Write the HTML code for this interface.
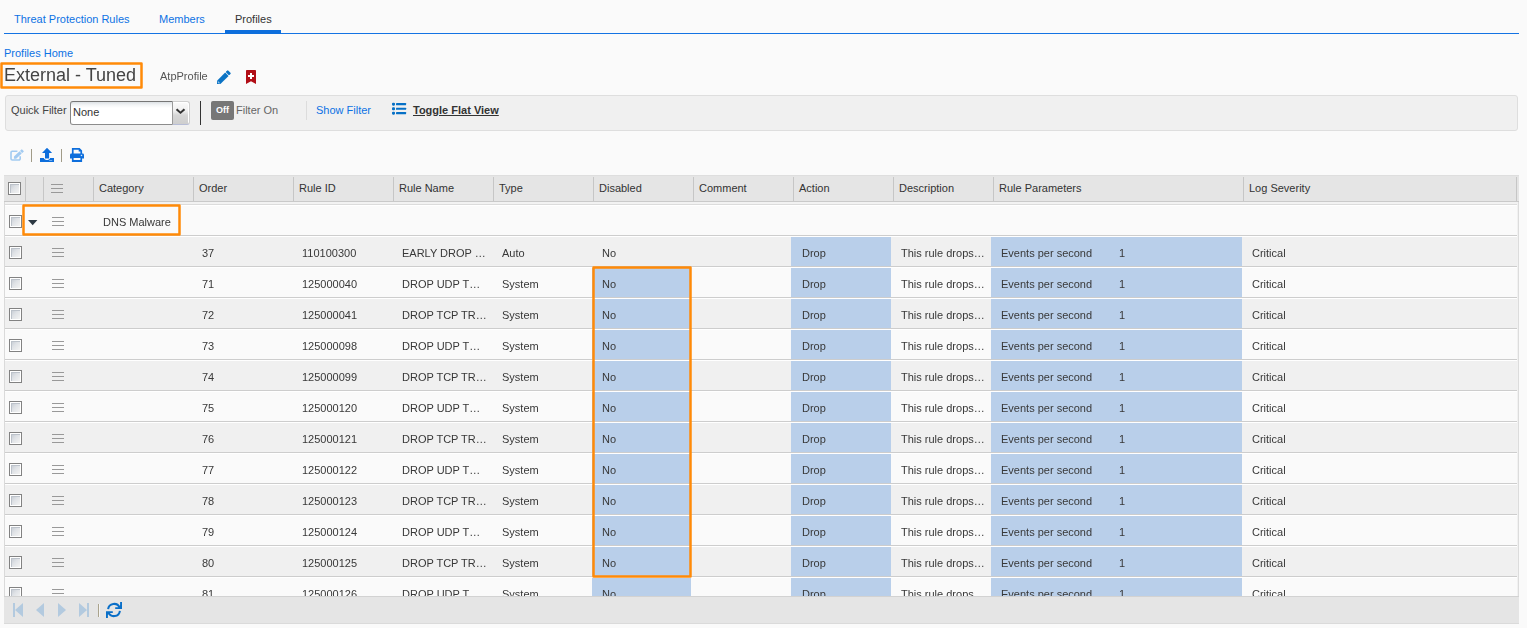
<!DOCTYPE html><html><head><meta charset="utf-8"><title>Profiles</title><style>
html,body{margin:0;padding:0}
body{width:1527px;height:628px;position:relative;overflow:hidden;background:#fafafa;font:11px/13px "Liberation Sans",sans-serif;color:#444}
.a{position:absolute;white-space:nowrap}
.lnk{color:#0d72e4}
.hd{position:absolute;left:4px;top:175px;width:1515px;height:25px;background:#e5e5e5;border-top:1px solid #dedede;border-bottom:1px solid #c9c9c9}
.hs{position:absolute;top:1px;width:1px;height:24px;background:#c6c6c6}
.ht{position:absolute;top:6px;color:#333;white-space:nowrap}
.cb{position:absolute;width:11px;height:11px;border:1px solid #828282;background:#fff;box-sizing:content-box}
.cb i{position:absolute;left:1px;top:1px;width:9px;height:9px;background:linear-gradient(135deg,#c3c9d1 0%,#dfe2e6 45%,#f3f3f3 100%);box-shadow:inset 1px 1px 0 #bcc2ca}
.hb{position:absolute;width:12px;height:9px;border-top:1px solid #999;border-bottom:1px solid #999;box-sizing:border-box}
.hb i{position:absolute;left:0;top:3px;width:12px;height:1px;background:#999}
.row{position:absolute;left:5px;width:1512px;height:29px;border-top:1px solid #fff;border-bottom:1px solid #cdcdcd;background:#fafafa}
.row.alt{background:#f0f0f0}
.row .t{position:absolute;top:10px;white-space:nowrap;color:#383838}
.gs{will-change:transform}
.bl{position:absolute;top:0;height:29px;background:#b9cfea}
</style></head><body>
<div class="a" style="left:4px;top:33px;width:1515px;height:1px;background:#1473e3"></div>
<div class="a" style="left:225px;top:30px;width:56px;height:4px;background:#0d6edc"></div>
<div class="a lnk" style="left:14px;top:13px">Threat Protection Rules</div>
<div class="a lnk" style="left:159px;top:13px">Members</div>
<div class="a" style="left:235px;top:13px;color:#333">Profiles</div>
<div class="a lnk" style="left:4px;top:47px">Profiles Home</div>
<svg class="a" style="left:0px;top:62px" width="143" height="27" viewBox="0 0 143 27"><rect x="1.500" y="1.500" width="140" height="24" fill="none" stroke="#ff8a08" stroke-width="2.500" stroke-linejoin="round"/></svg>
<svg class="a" style="left:217px;top:70px" width="15" height="15" viewBox="0 0 15 15"><g transform="translate(0,14.1) rotate(-45)" fill="#0b73c4"><path d="M0 0L2.400-2.400H14V2.400H2.400z"/><rect x="14.600" y="-2.400" width="3" height="4.800" rx="1"/><ellipse cx="2.300" cy="0" rx="0.700" ry="1.400" fill="#8ec0e8"/></g></svg>
<svg class="a" style="left:246px;top:70px" width="10" height="15" viewBox="0 0 10 15"><path d="M0.800 0h8.400a0.800 0.800 0 0 1 .8.800V14.100l-5-2.900L0 14.100V0.800A0.800 0.800 0 0 1 .8 0z" fill="#b10e16"/><path d="M4 2.900h2v2h2v2.100H6v2H4V7H2V4.900h2z" fill="#fff"/></svg>
<div class="a" style="left:5px;top:95px;width:1511px;height:34px;border:1px solid #dedede;border-radius:3px;background:#f0f0f0"></div>
<div class="a" style="left:11px;top:104px;color:#444">Quick Filter</div>
<div class="a" style="left:70px;top:101px;width:101px;height:22px;border:1px solid #858585;border-top-color:#767676;border-right-color:#9a9a9a;border-bottom-color:#8c8c8c;border-radius:3px 0 0 3px;background:linear-gradient(#dde1e5 0px,#f3f5f6 3px,#fff 6px)"></div>
<div class="a" style="left:173px;top:101px;width:16px;height:22px;border:1px solid #cfcfcf;border-left:0;border-bottom-color:#b7bdd6;border-radius:0 3px 3px 0;background:linear-gradient(#fbfbfb 0%,#efefef 40%,#d6d6d6 60%,#cecece 100%);box-shadow:inset -1px 1px 0 #fff"></div>
<svg class="a" style="left:175px;top:108px" width="11" height="7" viewBox="0 0 11 7"><path d="M0.800 2L2.300 0.600 5.500 3.500 8.700 0.600 10.200 2 5.500 6.100z" fill="#333"/></svg>
<div class="a" style="left:73px;top:106px;color:#333">None</div>
<div class="a" style="left:200px;top:101px;width:1px;height:24px;background:#333"></div>
<div class="a" style="left:211px;top:101px;width:23px;height:19px;border-radius:2px;background:#777"></div>
<div class="a" style="left:216px;top:104px;color:#fff;font-weight:bold;font-size:9px">Off</div>
<div class="a" style="left:236px;top:104px;color:#666">Filter On</div>
<div class="a" style="left:306px;top:101px;width:1px;height:19px;background:#dcdcdc"></div>
<div class="a lnk" style="left:316px;top:104px">Show Filter</div>
<svg class="a" style="left:392px;top:102px" width="15" height="14" viewBox="0 0 15 14"><g fill="#0670c6"><rect x="0" y="0.700" width="3" height="3" rx="1.100"/><rect x="4" y="1.100" width="10.100" height="2.100" rx=".4"/><rect x="0" y="5.300" width="3" height="3" rx="1.100"/><rect x="4" y="5.750" width="10.100" height="2.100" rx=".4"/><rect x="0" y="9.700" width="3" height="3" rx="1.100"/><rect x="4" y="10.100" width="10.100" height="2.100" rx=".4"/></g></svg>
<div class="a" style="left:413px;top:104px;color:#333;font-weight:bold;text-decoration:underline">Toggle Flat View</div>
<svg class="a" style="left:10px;top:148px" width="15" height="14" viewBox="0 0 15 14"><path d="M7.400 3.300H2.200A1.200 1.200 0 0 0 1 4.500v6.300A1.200 1.200 0 0 0 2.200 12h6.800a1.200 1.200 0 0 0 1.200-1.200V8.300" fill="none" stroke="#a3cbf1" stroke-width="1.600"/><g transform="translate(3.900,10.700) rotate(-43)" fill="#a3cbf1"><path d="M0 0L1.600-1.600H9.200V1.600H1.600z"/><rect x="9.800" y="-1.600" width="2.500" height="3.200" rx="0.500"/></g></svg>
<div class="a" style="left:31px;top:149px;width:1px;height:13px;background:#a19b88"></div>
<svg class="a" style="left:40px;top:148px" width="14" height="14" viewBox="0 0 14 14"><path d="M7 -0.200L12.100 5H9.100v5.600H5V5H2z" fill="#0d6edc"/><path d="M0 9.900h3.800c.6 1.300 1.800 2.100 3.200 2.100s2.600-.8 3.200-2.100H14v4.200H0z" fill="#0d6edc"/><rect x="9.200" y="12" width="3" height=".9" fill="#7db3ee"/></svg>
<div class="a" style="left:61px;top:149px;width:1px;height:13px;background:#a19b88"></div>
<svg class="a" style="left:70px;top:148px" width="14" height="14" viewBox="0 0 14 14"><path d="M1.900 0h7.700L12.100 2.500V6H10.400V3.400H8.700V1.800H3.600V6H1.900z" fill="#0d6edc"/><path d="M1.300 5.600h11.400A1.300 1.300 0 0 1 14 6.900v3.500h-1.900V13.900H1.900v-3.500H0V6.900a1.300 1.300 0 0 1 1.300-1.300zM3.600 10.100v1.900h6.800v-1.900z" fill="#0d6edc" fill-rule="evenodd"/><rect x="10.800" y="6.800" width="1.400" height="1.300" fill="#d6e7fb"/></svg>
<div class="a" style="left:4px;top:175px;width:1px;height:449px;background:#dadada"></div>
<div class="a" style="left:1517px;top:202px;width:1px;height:394px;background:#f1f1f1"></div>
<div class="a" style="left:1518px;top:175px;width:1px;height:449px;background:#dcdcdc"></div>
<div class="a" style="left:5px;top:202px;width:1513px;height:2px;background:#f2f2f2"></div>
<div class="a" style="left:5px;top:204px;width:1512px;height:1px;background:#dcdcdc"></div>
<div class="hd">
<div class="hs" style="left:21px"></div>
<div class="hs" style="left:39px"></div>
<div class="hs" style="left:89px"></div>
<div class="hs" style="left:189px"></div>
<div class="hs" style="left:289px"></div>
<div class="hs" style="left:389px"></div>
<div class="hs" style="left:489px"></div>
<div class="hs" style="left:589px"></div>
<div class="hs" style="left:689px"></div>
<div class="hs" style="left:789px"></div>
<div class="hs" style="left:889px"></div>
<div class="hs" style="left:989px"></div>
<div class="hs" style="left:1239px"></div>
<div class="hs" style="left:1512px"></div>
<div class="ht" style="left:95px">Category</div>
<div class="ht" style="left:195px">Order</div>
<div class="ht" style="left:295px">Rule ID</div>
<div class="ht" style="left:395px">Rule Name</div>
<div class="ht" style="left:495px">Type</div>
<div class="ht" style="left:595px">Disabled</div>
<div class="ht" style="left:695px">Comment</div>
<div class="ht" style="left:795px">Action</div>
<div class="ht" style="left:895px">Description</div>
<div class="ht" style="left:995px">Rule Parameters</div>
<div class="ht" style="left:1245px">Log Severity</div>
<div class="cb" style="left:4px;top:6px"><i></i></div>
<div class="hb" style="left:47px;top:8px"><i></i></div>
</div>
<div class="row gs" style="top:205px">
<div class="cb" style="left:4px;top:9px"><i></i></div>
<svg style="position:absolute;left:23px;top:14px" width="10" height="6" viewBox="0 0 10 6"><path d="M0 0.100h9.400L4.700 5.300z" fill="#2c3843"/></svg>
<div class="hb" style="left:47px;top:11px"><i></i></div>
<div class="t" style="left:98px">DNS Malware</div>
</div>
<div class="row alt gs" style="top:236px">
<div class="bl" style="left:786px;width:100px"></div>
<div class="bl" style="left:986px;width:251px"></div>
<div class="cb" style="left:4px;top:9px"><i></i></div>
<div class="hb" style="left:47px;top:11px"><i></i></div>
<div class="t" style="left:197px">37</div>
<div class="t" style="left:297px">110100300</div>
<div class="t" style="left:397px">EARLY DROP …</div>
<div class="t" style="left:497px">Auto</div>
<div class="t" style="left:597px">No</div>
<div class="t" style="left:797px">Drop</div>
<div class="t" style="left:896px">This rule drops…</div>
<div class="t" style="left:996px">Events per second</div>
<div class="t" style="left:1114px">1</div>
<div class="t" style="left:1247px">Critical</div>
</div>
<div class="row gs" style="top:267px">
<div class="bl" style="left:587px;width:99px"></div>
<div class="bl" style="left:786px;width:100px"></div>
<div class="bl" style="left:986px;width:251px"></div>
<div class="cb" style="left:4px;top:9px"><i></i></div>
<div class="hb" style="left:47px;top:11px"><i></i></div>
<div class="t" style="left:197px">71</div>
<div class="t" style="left:297px">125000040</div>
<div class="t" style="left:397px">DROP UDP T…</div>
<div class="t" style="left:497px">System</div>
<div class="t" style="left:597px">No</div>
<div class="t" style="left:797px">Drop</div>
<div class="t" style="left:896px">This rule drops…</div>
<div class="t" style="left:996px">Events per second</div>
<div class="t" style="left:1114px">1</div>
<div class="t" style="left:1247px">Critical</div>
</div>
<div class="row alt gs" style="top:298px">
<div class="bl" style="left:587px;width:99px"></div>
<div class="bl" style="left:786px;width:100px"></div>
<div class="bl" style="left:986px;width:251px"></div>
<div class="cb" style="left:4px;top:9px"><i></i></div>
<div class="hb" style="left:47px;top:11px"><i></i></div>
<div class="t" style="left:197px">72</div>
<div class="t" style="left:297px">125000041</div>
<div class="t" style="left:397px">DROP TCP TR…</div>
<div class="t" style="left:497px">System</div>
<div class="t" style="left:597px">No</div>
<div class="t" style="left:797px">Drop</div>
<div class="t" style="left:896px">This rule drops…</div>
<div class="t" style="left:996px">Events per second</div>
<div class="t" style="left:1114px">1</div>
<div class="t" style="left:1247px">Critical</div>
</div>
<div class="row gs" style="top:329px">
<div class="bl" style="left:587px;width:99px"></div>
<div class="bl" style="left:786px;width:100px"></div>
<div class="bl" style="left:986px;width:251px"></div>
<div class="cb" style="left:4px;top:9px"><i></i></div>
<div class="hb" style="left:47px;top:11px"><i></i></div>
<div class="t" style="left:197px">73</div>
<div class="t" style="left:297px">125000098</div>
<div class="t" style="left:397px">DROP UDP T…</div>
<div class="t" style="left:497px">System</div>
<div class="t" style="left:597px">No</div>
<div class="t" style="left:797px">Drop</div>
<div class="t" style="left:896px">This rule drops…</div>
<div class="t" style="left:996px">Events per second</div>
<div class="t" style="left:1114px">1</div>
<div class="t" style="left:1247px">Critical</div>
</div>
<div class="row alt gs" style="top:360px">
<div class="bl" style="left:587px;width:99px"></div>
<div class="bl" style="left:786px;width:100px"></div>
<div class="bl" style="left:986px;width:251px"></div>
<div class="cb" style="left:4px;top:9px"><i></i></div>
<div class="hb" style="left:47px;top:11px"><i></i></div>
<div class="t" style="left:197px">74</div>
<div class="t" style="left:297px">125000099</div>
<div class="t" style="left:397px">DROP TCP TR…</div>
<div class="t" style="left:497px">System</div>
<div class="t" style="left:597px">No</div>
<div class="t" style="left:797px">Drop</div>
<div class="t" style="left:896px">This rule drops…</div>
<div class="t" style="left:996px">Events per second</div>
<div class="t" style="left:1114px">1</div>
<div class="t" style="left:1247px">Critical</div>
</div>
<div class="row gs" style="top:391px">
<div class="bl" style="left:587px;width:99px"></div>
<div class="bl" style="left:786px;width:100px"></div>
<div class="bl" style="left:986px;width:251px"></div>
<div class="cb" style="left:4px;top:9px"><i></i></div>
<div class="hb" style="left:47px;top:11px"><i></i></div>
<div class="t" style="left:197px">75</div>
<div class="t" style="left:297px">125000120</div>
<div class="t" style="left:397px">DROP UDP T…</div>
<div class="t" style="left:497px">System</div>
<div class="t" style="left:597px">No</div>
<div class="t" style="left:797px">Drop</div>
<div class="t" style="left:896px">This rule drops…</div>
<div class="t" style="left:996px">Events per second</div>
<div class="t" style="left:1114px">1</div>
<div class="t" style="left:1247px">Critical</div>
</div>
<div class="row alt gs" style="top:422px">
<div class="bl" style="left:587px;width:99px"></div>
<div class="bl" style="left:786px;width:100px"></div>
<div class="bl" style="left:986px;width:251px"></div>
<div class="cb" style="left:4px;top:9px"><i></i></div>
<div class="hb" style="left:47px;top:11px"><i></i></div>
<div class="t" style="left:197px">76</div>
<div class="t" style="left:297px">125000121</div>
<div class="t" style="left:397px">DROP TCP TR…</div>
<div class="t" style="left:497px">System</div>
<div class="t" style="left:597px">No</div>
<div class="t" style="left:797px">Drop</div>
<div class="t" style="left:896px">This rule drops…</div>
<div class="t" style="left:996px">Events per second</div>
<div class="t" style="left:1114px">1</div>
<div class="t" style="left:1247px">Critical</div>
</div>
<div class="row gs" style="top:453px">
<div class="bl" style="left:587px;width:99px"></div>
<div class="bl" style="left:786px;width:100px"></div>
<div class="bl" style="left:986px;width:251px"></div>
<div class="cb" style="left:4px;top:9px"><i></i></div>
<div class="hb" style="left:47px;top:11px"><i></i></div>
<div class="t" style="left:197px">77</div>
<div class="t" style="left:297px">125000122</div>
<div class="t" style="left:397px">DROP UDP T…</div>
<div class="t" style="left:497px">System</div>
<div class="t" style="left:597px">No</div>
<div class="t" style="left:797px">Drop</div>
<div class="t" style="left:896px">This rule drops…</div>
<div class="t" style="left:996px">Events per second</div>
<div class="t" style="left:1114px">1</div>
<div class="t" style="left:1247px">Critical</div>
</div>
<div class="row alt gs" style="top:484px">
<div class="bl" style="left:587px;width:99px"></div>
<div class="bl" style="left:786px;width:100px"></div>
<div class="bl" style="left:986px;width:251px"></div>
<div class="cb" style="left:4px;top:9px"><i></i></div>
<div class="hb" style="left:47px;top:11px"><i></i></div>
<div class="t" style="left:197px">78</div>
<div class="t" style="left:297px">125000123</div>
<div class="t" style="left:397px">DROP TCP TR…</div>
<div class="t" style="left:497px">System</div>
<div class="t" style="left:597px">No</div>
<div class="t" style="left:797px">Drop</div>
<div class="t" style="left:896px">This rule drops…</div>
<div class="t" style="left:996px">Events per second</div>
<div class="t" style="left:1114px">1</div>
<div class="t" style="left:1247px">Critical</div>
</div>
<div class="row gs" style="top:515px">
<div class="bl" style="left:587px;width:99px"></div>
<div class="bl" style="left:786px;width:100px"></div>
<div class="bl" style="left:986px;width:251px"></div>
<div class="cb" style="left:4px;top:9px"><i></i></div>
<div class="hb" style="left:47px;top:11px"><i></i></div>
<div class="t" style="left:197px">79</div>
<div class="t" style="left:297px">125000124</div>
<div class="t" style="left:397px">DROP UDP T…</div>
<div class="t" style="left:497px">System</div>
<div class="t" style="left:597px">No</div>
<div class="t" style="left:797px">Drop</div>
<div class="t" style="left:896px">This rule drops…</div>
<div class="t" style="left:996px">Events per second</div>
<div class="t" style="left:1114px">1</div>
<div class="t" style="left:1247px">Critical</div>
</div>
<div class="row alt gs" style="top:546px">
<div class="bl" style="left:587px;width:99px"></div>
<div class="bl" style="left:786px;width:100px"></div>
<div class="bl" style="left:986px;width:251px"></div>
<div class="cb" style="left:4px;top:9px"><i></i></div>
<div class="hb" style="left:47px;top:11px"><i></i></div>
<div class="t" style="left:197px">80</div>
<div class="t" style="left:297px">125000125</div>
<div class="t" style="left:397px">DROP TCP TR…</div>
<div class="t" style="left:497px">System</div>
<div class="t" style="left:597px">No</div>
<div class="t" style="left:797px">Drop</div>
<div class="t" style="left:896px">This rule drops…</div>
<div class="t" style="left:996px">Events per second</div>
<div class="t" style="left:1114px">1</div>
<div class="t" style="left:1247px">Critical</div>
</div>
<div class="row gs" style="top:577px">
<div class="bl" style="left:587px;width:99px"></div>
<div class="bl" style="left:786px;width:100px"></div>
<div class="bl" style="left:986px;width:251px"></div>
<div class="cb" style="left:4px;top:9px"><i></i></div>
<div class="hb" style="left:47px;top:11px"><i></i></div>
<div class="t" style="left:197px">81</div>
<div class="t" style="left:297px">125000126</div>
<div class="t" style="left:397px">DROP UDP T…</div>
<div class="t" style="left:497px">System</div>
<div class="t" style="left:597px">No</div>
<div class="t" style="left:797px">Drop</div>
<div class="t" style="left:896px">This rule drops…</div>
<div class="t" style="left:996px">Events per second</div>
<div class="t" style="left:1114px">1</div>
<div class="t" style="left:1247px">Critical</div>
</div>
<svg class="a" style="left:22px;top:204px" width="159" height="32" viewBox="0 0 159 32"><rect x="1.500" y="1.500" width="156" height="29" fill="none" stroke="#ff8a08" stroke-width="2.500" stroke-linejoin="round"/></svg>
<svg class="a" style="left:592px;top:266px" width="100" height="312" viewBox="0 0 100 312"><rect x="1.500" y="1.500" width="97" height="309" fill="none" stroke="#ff8a08" stroke-width="2.500" stroke-linejoin="round"/></svg>
<div class="a" style="left:4px;top:596px;width:1515px;height:26px;background:#e5e5e5;border-top:1px solid #d2d2d2;border-bottom:1px solid #dadada"></div>
<svg class="a" style="left:13px;top:603px" width="10" height="14" viewBox="0 0 10 14"><path d="M0 0h2v14H0zM10 0v14L2 7z" fill="#b3cadf"/></svg>
<svg class="a" style="left:36px;top:603px" width="8" height="14" viewBox="0 0 8 14"><path d="M8 0v14L0 7z" fill="#b3cadf"/></svg>
<svg class="a" style="left:58px;top:603px" width="8" height="14" viewBox="0 0 8 14"><path d="M0 0v14l8-7z" fill="#b3cadf"/></svg>
<svg class="a" style="left:79px;top:603px" width="10" height="14" viewBox="0 0 10 14"><path d="M8 0h2v14H8zM0 0v14l8-7z" fill="#b3cadf"/></svg>
<div class="a" style="left:98px;top:604px;width:1px;height:13px;background:#aaa38c"></div>
<div class="a" style="left:99px;top:604px;width:1px;height:13px;background:#f5f5f5"></div>
<svg class="a" style="left:106px;top:602px" width="16" height="16" viewBox="0 0 16 16"><g fill="none" stroke="#0a6fc8" stroke-width="2"><path d="M2.100 7.200A6 6 0 0 1 13.600 5.600"/><path d="M13.900 8.800A6 6 0 0 1 2.400 10.400"/></g><path d="M14.100 0.100H16V7.100H9.200V5.300H12.500L14.100 3.300z" fill="#0a6fc8"/><path d="M1.900 15.900H0V9.200H6.800V10.900H3.500L1.900 12.700z" fill="#0a6fc8"/></svg>
<div class="a gs" style="left:4px;top:65px;font-size:18px;line-height:21px;color:#444">External - Tuned</div>
<div class="a gs" style="left:160px;top:70px;color:#555">AtpProfile</div>
</body></html>
